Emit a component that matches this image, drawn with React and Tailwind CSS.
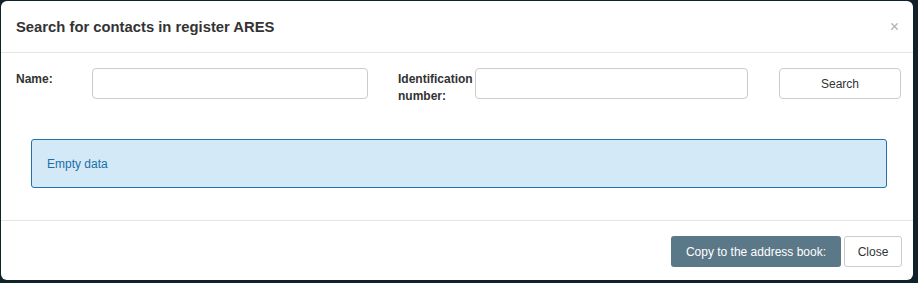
import { X } from 'lucide-react'

// Dialog: search contacts in ARES register
export default function App() {
  return (
    <div
      className="h-[283px] w-[918px] bg-[#10212a] pb-[3px] pl-px pr-[5px] pt-px text-[12px] text-[#333]"
      style={{ fontFamily: '"Liberation Sans", Arial, sans-serif' }}
    >
      <div className="flex h-full flex-col rounded-[6px] bg-white">
        {/* Header */}
        <div className="flex h-[52px] shrink-0 items-center justify-between border-b border-[#e5e5e5] pl-[15px] pr-[13px]">
          <h4 className="pt-px text-[14.8px] font-bold text-[#333]">Search for contacts in register ARES</h4>
          <button className="text-[#b3b3b3]">
            <X size={11} strokeWidth={3} />
          </button>
        </div>

        {/* Body */}
        <div className="flex-1 pl-[15px] pr-[12px] pt-[15px]">
          <div className="flex h-[31px] items-start">
            <label className="w-[76px] pt-[3px] font-bold leading-[17px]">Name:</label>
            <input
              type="text"
              className="h-[31px] w-[276px] rounded-[4px] border border-[#ccc] px-2 outline-none"
            />
            <label className="ml-[30px] w-[77px] pt-[3px] font-bold leading-[17px]">
              Identification number:
            </label>
            <input
              type="text"
              className="h-[31px] w-[273px] rounded-[4px] border border-[#ccc] px-2 outline-none"
            />
            <button className="ml-[31px] h-[31px] w-[122px] rounded-[4px] border border-[#ccc] bg-white text-[12px] text-[#333]">
              Search
            </button>
          </div>

          <div className="ml-[15px] mr-[14px] mt-[40px] flex h-[49px] items-center rounded-[3px] border border-[#2372aa] bg-[#d3e9f7] px-[15px] text-[#1c6fa6]">
            Empty data
          </div>
        </div>

        {/* Footer */}
        <div className="flex h-[60px] shrink-0 items-start justify-end gap-[3px] border-t border-[#e5e5e5] pr-[11px] pt-[15px]">
          <button className="h-[31px] rounded-[3px] bg-[#5b7888] px-[15px] text-[12px] text-white">
            Copy to the address book:
          </button>
          <button className="h-[31px] w-[58px] rounded-[3px] border border-[#ccc] bg-white text-[12px] text-[#333]">
            Close
          </button>
        </div>
      </div>
    </div>
  )
}
